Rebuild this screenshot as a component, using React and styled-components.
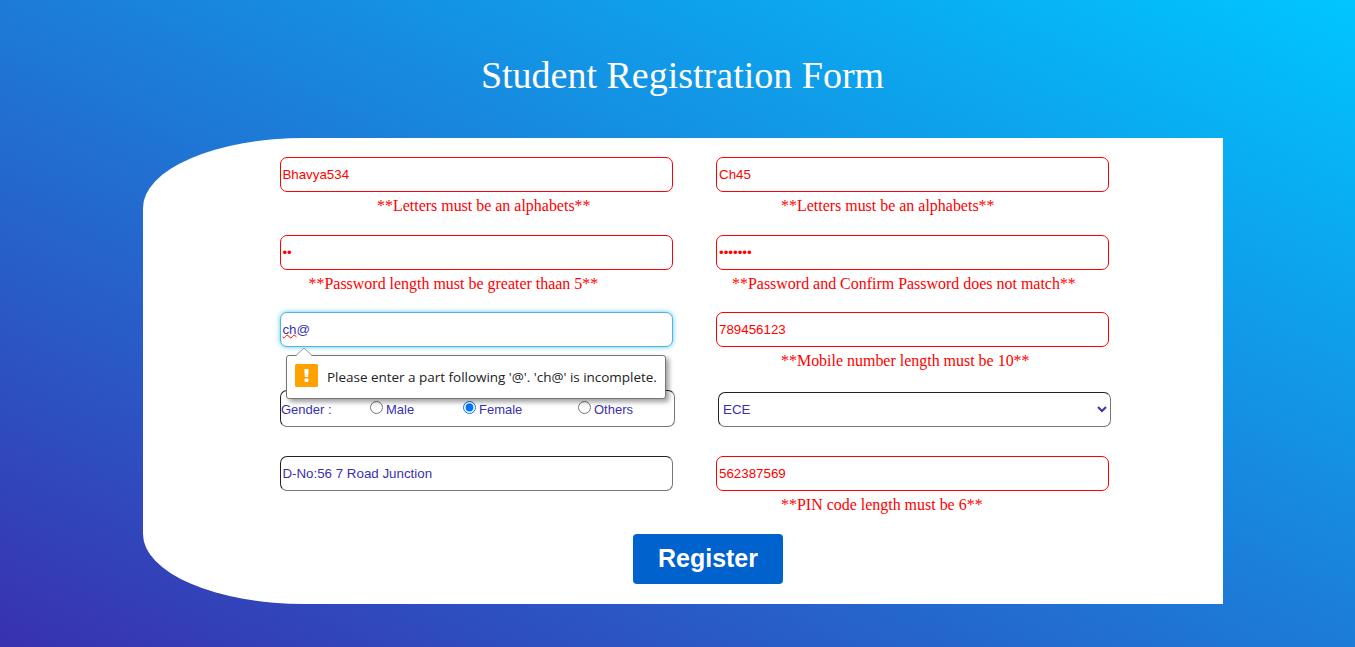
import React from 'react';
import styled, { createGlobalStyle, css } from 'styled-components';

const GlobalStyle = createGlobalStyle`
  * { box-sizing: border-box; }
  html, body { margin: 0; height: 100%; }
  body { overflow: hidden; font-family: 'Liberation Serif', 'Times New Roman', serif; }
`;

const Page = styled.div`
  height: 647px;
  padding-top: 53px;
  background: linear-gradient(to top right, #3931af, #00c6ff);
`;

const Title = styled.h1`
  margin: 0 0 41px 10px;
  height: 44px;
  line-height: 44px;
  font-size: 38px;
  font-weight: 400;
  text-align: center;
  color: #fff;
`;

const Card = styled.form`
  width: 1080px;
  height: 466px;
  margin-left: 143px;
  padding: 19px 0 0 137px;
  background: #fff;
  border-radius: 15% 0 0 15%;
`;

const Row = styled.div`
  display: grid;
  grid-template-columns: 393px 393px;
  column-gap: 43px;
  height: ${(p) => p.$height}px;
`;

const Field = styled.div`
  position: relative;
`;

const controlStyle = css`
  display: block;
  width: 393px;
  height: 35px;
  padding: 1px 2px;
  border: 1px solid;
  border-color: ${(p) => (p.$invalid ? '#f00' : '#222 #767676 #767676 #222')};
  border-radius: 7px;
  outline: none;
  background: #fff;
  color: ${(p) => (p.$invalid ? '#f00' : '#3931af')};
  font: 13.333px 'Liberation Sans', Arial, sans-serif;
`;

const Input = styled.input`
  ${controlStyle}
  padding-left: ${(p) => (p.$tight ? 1.4 : 2)}px;
`;

const FocusedInput = styled.div`
  ${controlStyle}
  padding-left: 1.4px;
  line-height: 31px;
  border-color: #55b1e0;
  box-shadow: 0 0 5px #51cbee;
`;

const Misspelled = styled.span`
  text-decoration: underline wavy #f00 1px;
  text-decoration-skip-ink: none;
  text-underline-offset: 0;
`;

const Select = styled.select`
  ${controlStyle}
  margin: 2px 0 0 2px;
  padding: 0;
`;

const ErrorText = styled.div`
  padding-left: ${(p) => p.$indent}px;
  margin-top: 4px;
  line-height: 19px;
  font-size: 15.96px;
  white-space: nowrap;
  color: #f00;
`;

const GenderBox = styled.div`
  ${controlStyle}
  display: flex;
  align-items: flex-start;
  width: 395px;
  height: 37px;
  padding: 10px 0 0;
  font-size: 13px;
  line-height: 17px;
`;

const GenderLabel = styled.span`
  width: 84px;
`;

const Option = styled.label`
  display: flex;
  width: ${(p) => p.$width}px;

  input {
    width: 13px;
    height: 13px;
    margin: 0 3px 0 5px;
  }
`;

const Bubble = styled.div`
  position: absolute;
  z-index: 2;
  top: 43px;
  left: 6px;
  display: flex;
  align-items: center;
  width: 380px;
  height: 44px;
  padding-left: 8px;
  border: 1px solid #767676;
  border-radius: 3px;
  background: #fff;
  box-shadow: 3px 3px 5px rgba(0, 0, 0, 0.38);
  font: 13.5px 'Open Sans', 'Noto Sans', sans-serif;
  letter-spacing: -0.025px;
  color: #222;
  white-space: nowrap;
`;

const BubbleArrow = styled.svg`
  position: absolute;
  top: -9px;
  left: 8px;
`;

const WarningIcon = styled.svg`
  margin: -4px 9px 0 0;
`;

const Register = styled.button`
  display: block;
  width: 150px;
  height: 50px;
  margin-left: 353px;
  padding: 0 0 2px;
  border: 0;
  border-radius: 4px;
  background: #0062cc;
  color: #fff;
  font: bold 25px 'Liberation Sans', Arial, sans-serif;
`;

function TextField({ value, error, indent, tight, type = 'text' }) {
  return (
    <Field>
      <Input type={type} defaultValue={value} $invalid={!!error} $tight={tight} />
      {error && <ErrorText $indent={indent}>{error}</ErrorText>}
    </Field>
  );
}

function ValidationBubble({ children }) {
  return (
    <Bubble>
      <BubbleArrow width="18" height="10">
        <path d="M1 9 L9 1 L17 9 V10 H1Z" fill="#fff" />
        <path d="M1 8.5 L9 1 L17 8.5" fill="none" stroke="#999" />
      </BubbleArrow>
      <WarningIcon width="23" height="23">
        <rect width="23" height="23" rx="1.5" fill="#ffa100" />
        <path d="M9.3 5h4.4l-.5 8h-3.4z" fill="#fff" />
        <rect x="9.6" y="14.5" width="3.8" height="3.5" rx="0.8" fill="#fff" />
      </WarningIcon>
      <span>{children}</span>
    </Bubble>
  );
}

export default function App() {
  return (
    <>
      <GlobalStyle />
      <Page>
        <Title>Student Registration Form</Title>
        <Card onSubmit={(e) => e.preventDefault()}>
          <Row $height={78}>
            <TextField tight value="Bhavya534" error="**Letters must be an alphabets**" indent={97} />
            <TextField value="Ch45" error="**Letters must be an alphabets**" indent={65} />
          </Row>
          <Row $height={77}>
            <TextField tight type="password" value="ab" error="**Password length must be greater thaan 5**" indent={28.5} />
            <TextField type="password" value="abcdefg" error="**Password and Confirm Password does not match**" indent={16} />
          </Row>
          <Row $height={78}>
            <Field>
              <FocusedInput>
                <Misspelled>ch</Misspelled>@
              </FocusedInput>
              <ValidationBubble>Please enter a part following '@'. 'ch@' is incomplete.</ValidationBubble>
            </Field>
            <TextField value="789456123" error="**Mobile number length must be 10**" indent={65} />
          </Row>
          <Row $height={66}>
            <GenderBox>
              <GenderLabel>Gender :</GenderLabel>
              <Option $width={93}><input type="radio" name="gender" />Male</Option>
              <Option $width={115}><input type="radio" name="gender" defaultChecked />Female</Option>
              <Option $width={80}><input type="radio" name="gender" />Others</Option>
            </GenderBox>
            <Select defaultValue="ECE">
              <option>ECE</option>
            </Select>
          </Row>
          <Row $height={78}>
            <TextField tight value="D-No:56 7 Road Junction" />
            <TextField value="562387569" error="**PIN code length must be 6**" indent={65} />
          </Row>
          <Register type="submit">Register</Register>
        </Card>
      </Page>
    </>
  );
}
